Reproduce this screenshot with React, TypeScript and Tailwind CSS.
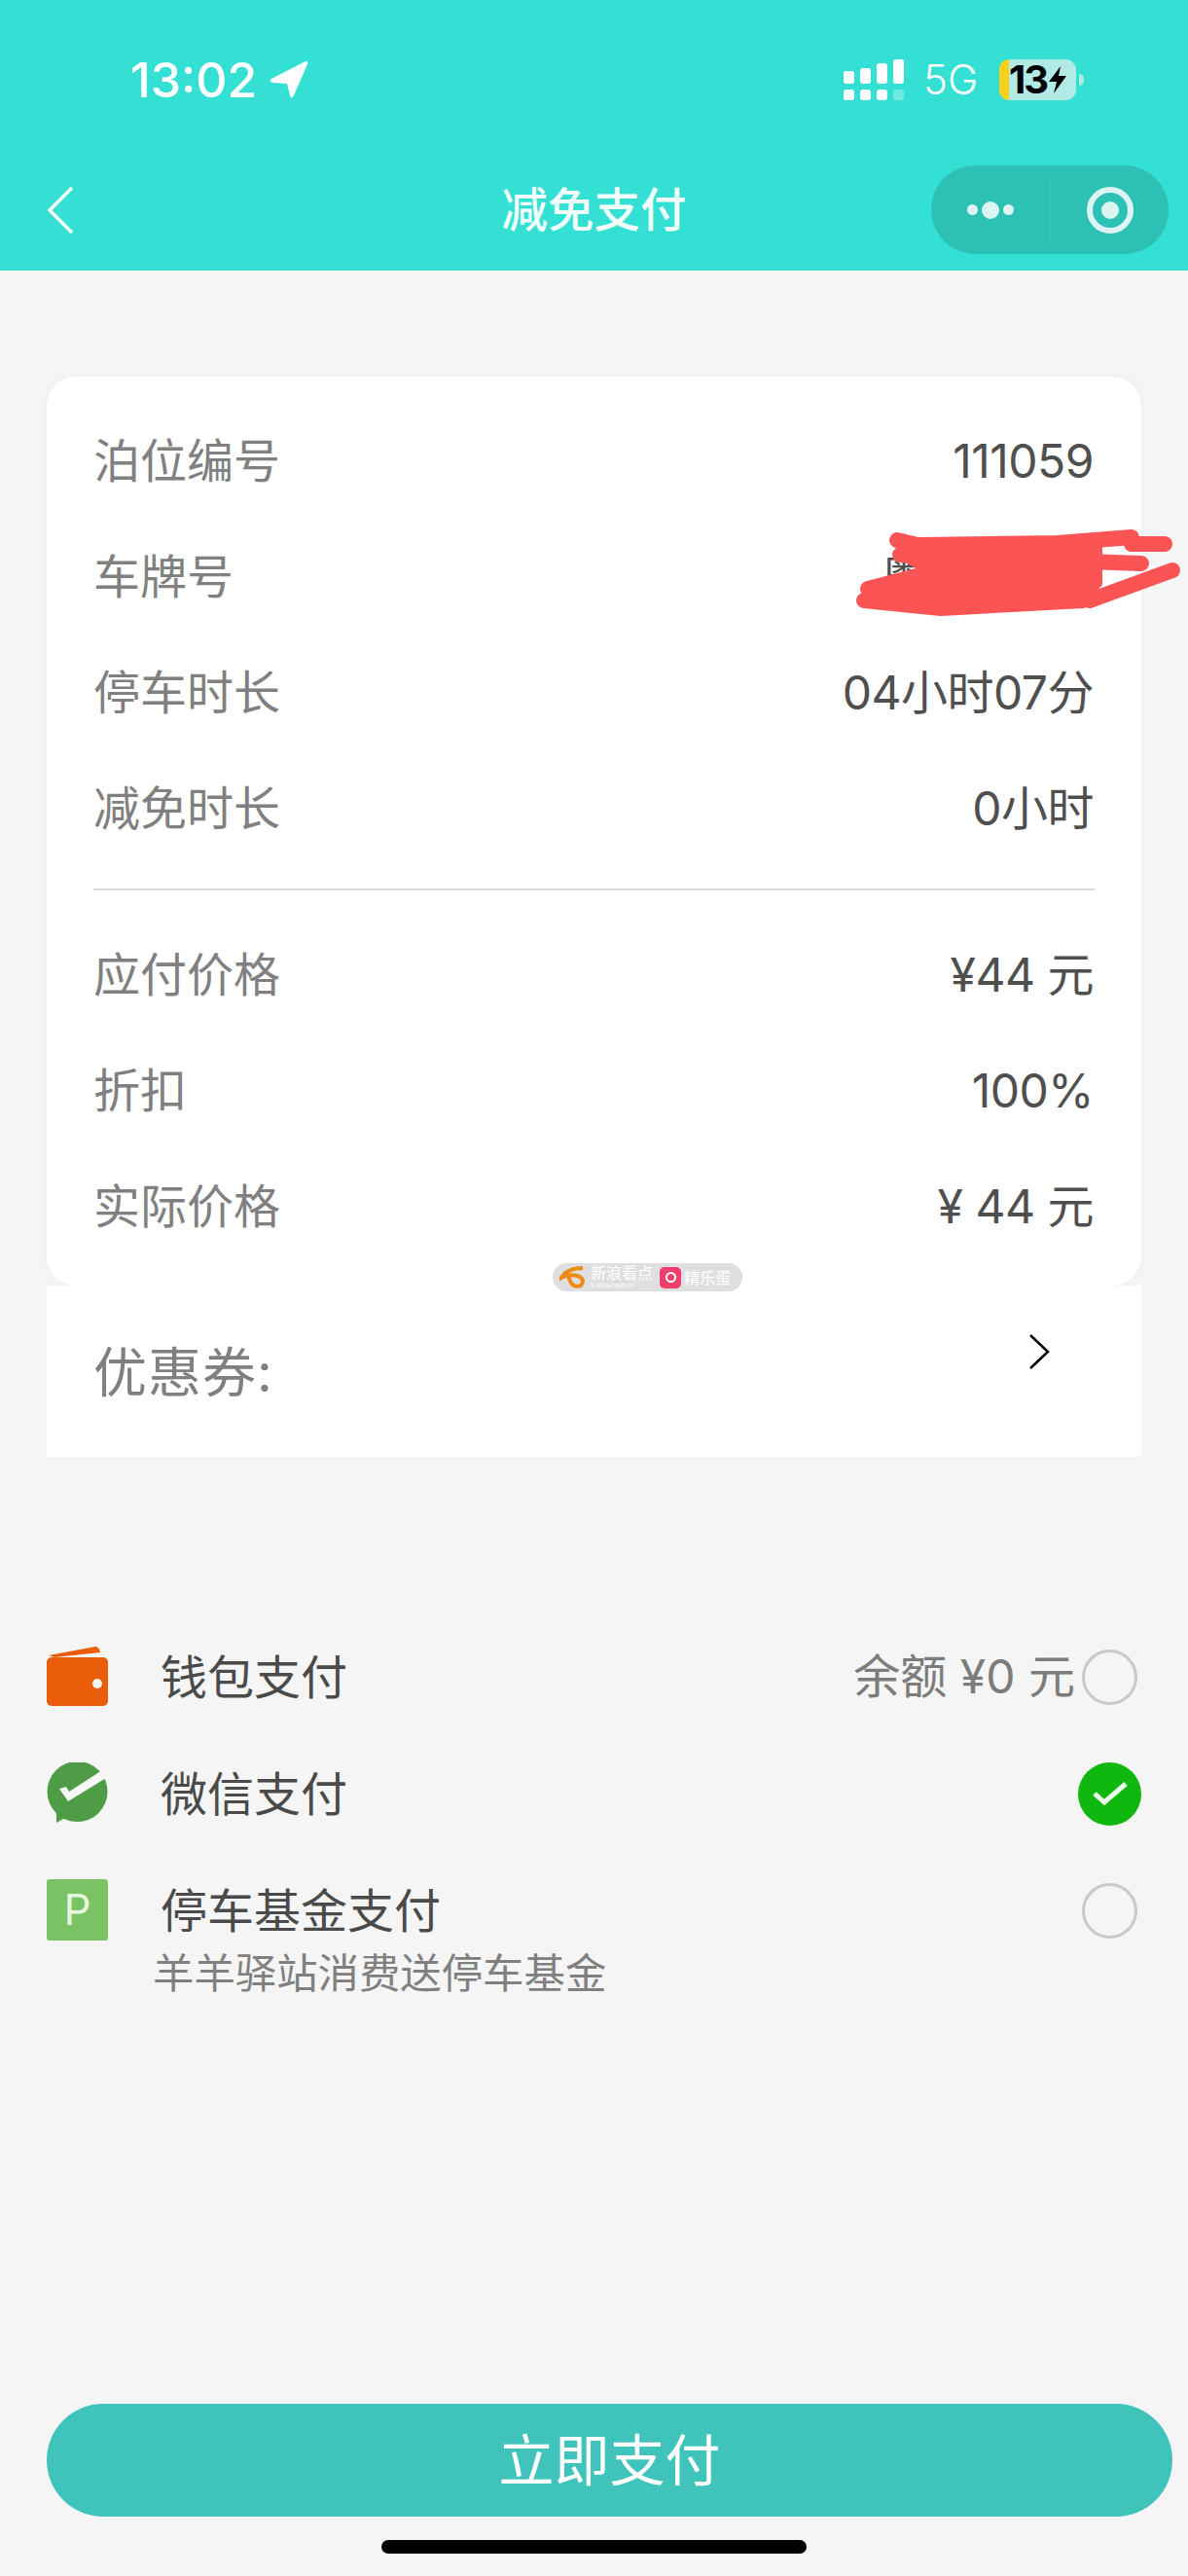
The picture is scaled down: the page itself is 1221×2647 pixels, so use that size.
const cjk = "font-['Inter','Noto_Sans_CJK_SC',sans-serif]";

const detailRows = [
  { label: "泊位编号", value: "111059" },
  { label: "车牌号", value: "粤", plate: true },
  { label: "停车时长", value: "04小时07分" },
  { label: "减免时长", value: "0小时" },
];

const priceRows = [
  { label: "应付价格", value: "¥44 元" },
  { label: "折扣", value: "100%" },
  { label: "实际价格", value: "¥ 44 元" },
];

const Row = ({ label, value, plate }: { label: string; value: string; plate?: boolean }) => (
  <div className="flex h-[119px] items-center justify-between">
    <span className="text-[48px] leading-none text-[#808080]">{label}</span>
    <span
      className={
        plate
          ? "mr-[172px] text-[48px] leading-none text-[#4f4f4f]"
          : "mr-[1px] text-[48px] leading-none tracking-[-0.5px] text-[#4f4f4f]"
      }
    >
      {value}
    </span>
  </div>
);

const StatusBar = () => (
  <div className="flex h-[42px] items-center justify-between pl-[134px] pr-[107px]">
    <div className="flex items-center gap-[13px] text-white">
      <span className="text-[50px] font-medium leading-none">13:02</span>
      <svg width="40" height="40" viewBox="0 0 40 40" fill="white">
        <path d="M37 1 Q40 0 39 4 L25 36 Q22 41 21 36 L18 24 L3 23 Q-1 21 2 19 Z" />
      </svg>
    </div>
    <div className="flex items-center">
      <div className="flex h-[42px] w-[62px] items-end gap-[6px]">
        <div className="flex w-[11px] flex-col gap-[6px]">
          <span className="h-[13px] rounded-[3px] bg-white" />
          <span className="h-[11px] rounded-[3px] bg-white" />
        </div>
        <div className="flex w-[11px] flex-col gap-[6px]">
          <span className="h-[16px] rounded-[3px] bg-white" />
          <span className="h-[11px] rounded-[3px] bg-white" />
        </div>
        <div className="flex w-[11px] flex-col gap-[6px]">
          <span className="h-[21px] rounded-[3px] bg-white" />
          <span className="h-[11px] rounded-[3px] bg-white" />
        </div>
        <div className="flex w-[11px] flex-col gap-[6px]">
          <span className="h-[25px] rounded-[3px] bg-white" />
          <span className="h-[11px] rounded-[3px] bg-white/30" />
        </div>
      </div>
      <span className="ml-[20px] w-[57px] text-[42px] font-light leading-none text-white">5G</span>
      <div className="ml-[21px] flex h-[42px] w-[79px] items-center rounded-[11px] bg-[#b2ebe6]">
        <span className="h-full w-[10px] rounded-l-[11px] bg-[#f7d117]" />
        <span className="text-[40px] font-bold leading-none tracking-[-2px] text-black">13</span>
        <svg width="20" height="28" viewBox="0 0 20 28" fill="black" className="ml-[1px]">
          <path d="M13 0 L1 16 L9 16 L6 28 L19 10 L11 10 Z" />
        </svg>
      </div>
      <span className="ml-[3px] h-[12px] w-[5px] rounded-r-full bg-[#b2ebe6]" />
    </div>
  </div>
);

const NavBar = () => (
  <div className="mt-[67px] grid h-[91px] grid-cols-[1fr_auto_1fr] items-center">
    <div className="pl-[47px]">
      <svg width="30" height="50" viewBox="0 0 30 50" fill="none" stroke="white" strokeWidth="3.5">
        <path d="M27 2 L4 25 L27 48" />
      </svg>
    </div>
    <h1 className="text-[47.5px] font-medium leading-none text-[#f3fffd]">减免支付</h1>
    <div className="flex justify-end pr-[20px]">
      <div className="flex h-[91px] w-[244px] items-center rounded-full bg-[#2dc0b4]">
        <div className="flex w-[122px] items-center justify-center gap-[4px]">
          <span className="h-[11px] w-[11px] rounded-full bg-[#dcf4f2]" />
          <span className="h-[18px] w-[18px] rounded-full bg-[#dcf4f2]" />
          <span className="h-[11px] w-[11px] rounded-full bg-[#dcf4f2]" />
        </div>
        <span className="h-[60px] w-px bg-[#3cc9bd]" />
        <div className="flex flex-1 items-center justify-center">
          <div className="flex h-[48px] w-[48px] items-center justify-center rounded-full border-[6px] border-[#dcf4f2]">
            <span className="h-[18px] w-[18px] rounded-full bg-[#dcf4f2]" />
          </div>
        </div>
      </div>
    </div>
  </div>
);

// the red scribble hiding the plate number
const Scribble = () => (
  <svg
    className="absolute left-[875px] top-[535px]"
    width="346"
    height="110"
    viewBox="875 535 346 110"
    fill="none"
    stroke="#fb5454"
    strokeWidth="16"
    strokeLinecap="round"
    strokeLinejoin="round"
  >
    <path d="M925 560 L1130 560 L1130 600 L1110 612 L967 622 L895 610 L950 585 L925 572 Z" fill="#fb5454" strokeWidth="6" />
    <path d="M922 555 L943 560 L1087 558 L1163 552" />
    <path d="M1163 559 L1197 559" />
    <path d="M925 570 L1173 579" />
    <path d="M1205 586 L1120 617" />
    <path d="M892 605 L950 590 L1123 600" />
    <path d="M888 617 L967 625 L1113 617" />
  </svg>
);

const Watermark = () => (
  <div className="absolute left-[568px] top-[1298px] flex h-[29px] w-[195px] items-center rounded-full bg-[#dfdfdf] pl-[7px]">
    <svg width="30" height="25" viewBox="0 0 30 25" fill="none" stroke="#ee8a12" strokeWidth="4">
      <path d="M24 3 Q8 3 2 13 Q9 9 19 11 Q27 15 22 21 Q12 25 9 10" />
    </svg>
    <span className="ml-[2px] flex w-[71px] flex-col text-white">
      <span className="text-[16px] leading-[17px]">新浪看点</span>
      <span className="text-[7px] leading-[8px]">k.sina.com.cn</span>
    </span>
    <span className="flex h-[22px] w-[22px] items-center justify-center rounded-[5px] bg-[#ee3f6c]">
      <span className="h-[11px] w-[11px] rounded-full border-2 border-white" />
    </span>
    <span className="ml-[3px] text-[16px] leading-none text-white">精乐蛋</span>
  </div>
);

const Radio = () => <span className="h-[57px] w-[57px] rounded-full border-[3px] border-[#c9c9c9]" />;

const PayRow = ({ icon, title, right }: { icon: React.ReactNode; title: string; right: React.ReactNode }) => (
  <div className="flex h-[120px] items-center pl-[48px] pr-[52px]">
    <div className="-mt-[2px] h-[63px] w-[63px]">{icon}</div>
    <span className="ml-[54px] mt-[2px] text-[48px] leading-none text-[#4a4a4a]">{title}</span>
    <div className="ml-auto flex items-center">{right}</div>
  </div>
);

export default function App() {
  return (
    <div className={`relative flex h-[2647px] w-[1221px] flex-col overflow-hidden bg-[#f5f5f5] ${cjk}`}>
      <header className="h-[278px] bg-[#33e0d3] pt-[61px]">
        <StatusBar />
        <NavBar />
      </header>

      <main className="mx-[48px] mt-[109px]">
        <section className="rounded-[30px] bg-white px-[48px] pb-[22px] pt-[27px] shadow-[0_0_8px_rgba(0,0,0,0.04)]">
          {detailRows.map((row) => (
            <Row key={row.label} {...row} />
          ))}
          <div className="mb-[27px] mt-[23px] h-[2px] bg-[#d8d8d8]" />
          {priceRows.map((row) => (
            <Row key={row.label} {...row} />
          ))}
        </section>
        <section className="flex h-[176px] justify-between bg-white pl-[48px] pr-[94px]">
          <span className="mt-[62px] text-[55px] leading-none tracking-[1px] text-[#808080]">优惠券:</span>
          <svg className="mt-[50px]" width="22" height="36" viewBox="0 0 22 36" fill="none" stroke="black" strokeWidth="2.5">
            <path d="M2 1 L20 18 L2 35" />
          </svg>
        </section>
      </main>

      <section className="mt-[166px]">
        <PayRow
          title="钱包支付"
          icon={
            <svg width="63" height="63" viewBox="0 0 63 63">
              <path d="M2 10 L50 1 Q54 1 55 7 L8 12 Z" fill="#ea5d0a" />
              <rect x="0" y="12" width="63" height="50" rx="5" fill="#ea5d0a" />
              <circle cx="52" cy="39" r="5" fill="#f7f3ee" />
            </svg>
          }
          right={
            <>
              <span className="mr-[7px] text-[48px] leading-none text-[#7c7c7c]">余额 ¥0 元</span>
              <Radio />
            </>
          }
        />
        <PayRow
          title="微信支付"
          icon={
            <svg width="63" height="63" viewBox="0 0 63 63">
              <circle cx="31.5" cy="30" r="31" fill="#4f9c47" />
              <path d="M10 40 L10 62 L24 54 Z" fill="#4f9c47" />
              <path d="M13 27 L22 40 L61 16 L57 8 L23 30 L20 25 Z" fill="#f7f7f7" />
            </svg>
          }
          right={
            <span className="-mx-[4px] flex h-[65px] w-[65px] items-center justify-center rounded-full bg-[#0fb70f]">
              <svg width="36" height="26" viewBox="0 0 36 26" fill="none" stroke="#e9fbe9" strokeWidth="5">
                <path d="M2 13 L12 22 L34 3" />
              </svg>
            </span>
          }
        />
        <PayRow
          title="停车基金支付"
          icon={
            <div className="flex h-[63px] w-[63px] items-center justify-center rounded-[3px] bg-[#79c365] text-[44px] leading-none text-[#e4f6dd]">
              P
            </div>
          }
          right={<Radio />}
        />
        <p className="ml-[157px] -mt-[16px] text-[42.4px] leading-none text-[#808080]">羊羊驿站消费送停车基金</p>
      </section>

      <button className="ml-[48px] mt-auto h-[116px] w-[1157px] rounded-full bg-[#3fc3bb] text-[57px] leading-none text-white">
        立即支付
      </button>
      <div className="mb-[23px] ml-[392px] mt-[24px] h-[14px] w-[437px] rounded-full bg-black" />

      <Scribble />
      <Watermark />
    </div>
  );
}
